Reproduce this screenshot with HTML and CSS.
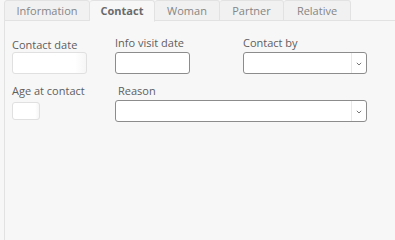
FILE: index.html
```html
<!DOCTYPE html>
<html lang="en">
<head>
<meta charset="UTF-8">
<title>Contact</title>
<link rel="stylesheet" href="styles.css">
</head>
<body>

<div class="tabs">
    <div class="tab">Information</div>
    <div class="tab active">Contact</div>
    <div class="tab">Woman</div>
    <div class="tab">Partner</div>
    <div class="tab">Relative</div>
</div>

<div class="panel">
    <div class="form-grid">
        <div class="field">
            <label class="low">Contact date</label>
            <div class="input disabled w-date"></div>
        </div>
        <div class="field">
            <label>Info visit date</label>
            <div class="input w-date"></div>
        </div>
        <div class="field">
            <label>Contact by</label>
            <div class="select">
                <span class="select-value"></span>
                <span class="select-arrow"><svg width="6" height="4" viewBox="0 0 6 4"><path d="M0.8 0.8l2.2 2.2 2.2-2.2" fill="none" stroke="#777" stroke-width="1"/></svg></span>
            </div>
        </div>
        <div class="field row2">
            <label>Age at contact</label>
            <div class="input disabled w-age"></div>
        </div>
        <div class="field row2 span2">
            <label class="indent">Reason</label>
            <div class="select">
                <span class="select-value"></span>
                <span class="select-arrow"><svg width="6" height="4" viewBox="0 0 6 4"><path d="M0.8 0.8l2.2 2.2 2.2-2.2" fill="none" stroke="#777" stroke-width="1"/></svg></span>
            </div>
        </div>
    </div>
</div>

</body>
</html>
```

FILE: styles.css
```css
body {
    margin: 0;
    padding: 0 0 0 4px;
    background-color: #f7f7f7;
    font-family: 'Open Sans', 'Liberation Sans', sans-serif;
    font-size: 11px;
    color: #5e5e5e;
    height: 240px;
    display: flex;
    flex-direction: column;
    box-sizing: border-box;
}

/* tabs */
.tabs {
    display: flex;
    height: 21px;
    box-sizing: border-box;
    border-bottom: 1px solid #e2e2e2;
    background-color: #f7f7f7;
}

.tab {
    width: 86px;
    box-sizing: border-box;
    height: 21px;
    line-height: 20px;
    text-align: center;
    color: #858585;
    background-color: #f1f1f1;
    border: 1px solid #e2e2e2;
    border-left: none;
    border-radius: 3px 3px 0 0;
}

.tab:first-child {
    border-left: 1px solid #e2e2e2;
}

.tab:nth-child(2) { width: 65px; }
.tab:nth-child(3) { width: 65px; }
.tab:nth-child(4) { width: 64px; }
.tab:nth-child(5) { width: 67px; }

.tab.active {
    background-color: #f7f7f7;
    border-bottom-color: #f7f7f7;
    font-weight: bold;
    color: #6a6a6a;
    height: 22px;
}

/* panel */
.panel {
    flex: 1;
    border-left: 1px solid #e2e2e2;
    padding: 14px 0 0 7px;
}

.form-grid {
    display: grid;
    grid-template-columns: 103px 128px 124px;
    row-gap: 9px;
}

.field {
    display: flex;
    flex-direction: column;
    gap: 2px;
}

.field label {
    height: 15px;
    line-height: 15px;
}

.field label.low {
    margin-top: 2px;
    margin-bottom: -2px;
}

.field label.indent {
    padding-left: 3px;
}

.field.span2 {
    grid-column: 2 / 4;
}

.input {
    height: 22px;
    box-sizing: border-box;
    background-color: #fff;
    border: 1px solid #8c8c8c;
    border-radius: 3px;
}

.input.disabled {
    border-color: #e0e0e0;
    background: linear-gradient(to right, #fff 85%, #f6f6f6);
}

.w-date { width: 75px; }

.w-age {
    width: 28px;
    height: 18px;
    margin-top: 2px;
}

.select {
    height: 22px;
    box-sizing: border-box;
    display: flex;
    background-color: #fff;
    border: 1px solid #8c8c8c;
    border-radius: 3px;
}

.select-value {
    flex: 1;
}

.select-arrow {
    width: 15px;
    border-left: 1px solid #e8e8e8;
    display: flex;
    align-items: center;
    justify-content: center;
    padding-top: 1px;
    box-sizing: border-box;
}
```
